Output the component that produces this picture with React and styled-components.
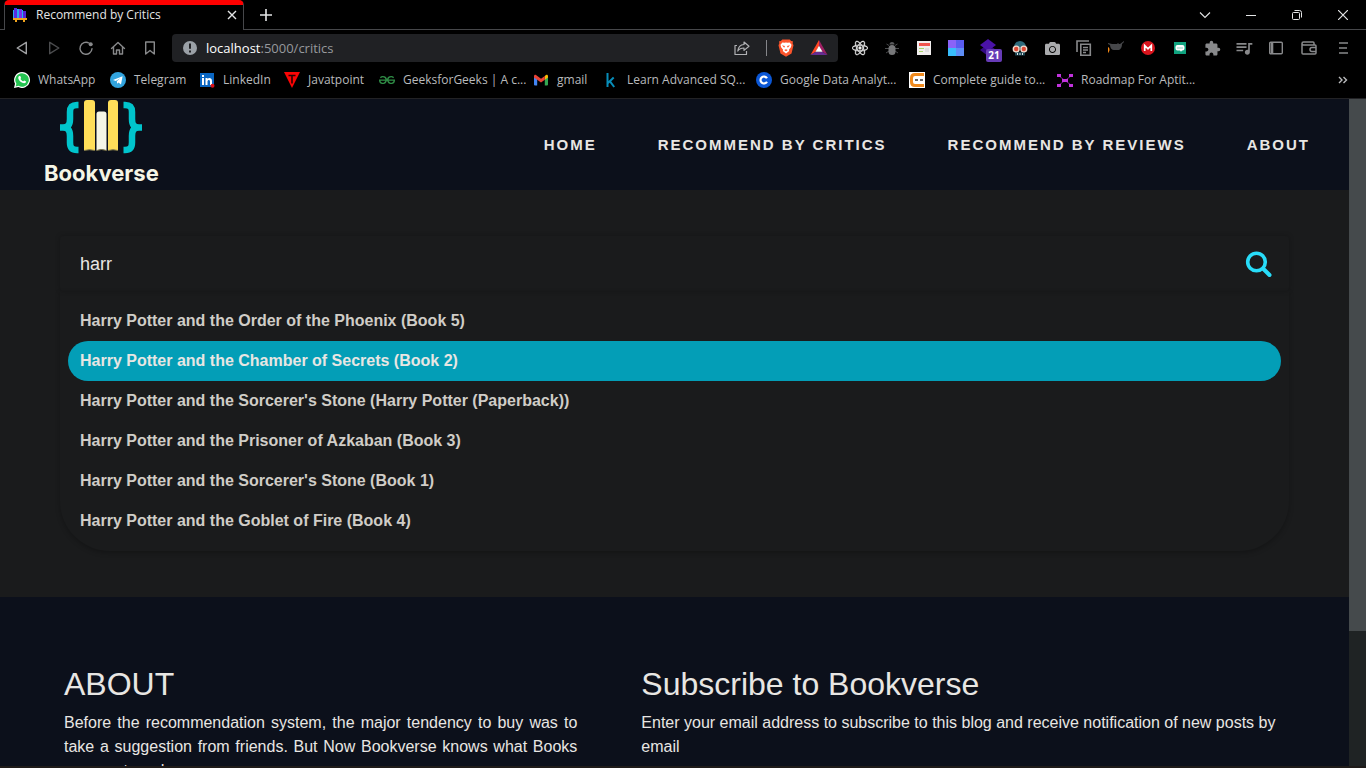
import React from "react";
import styled, { createGlobalStyle } from "styled-components";
import { FaReact, FaCamera } from "react-icons/fa";
import { SiGeeksforgeeks } from "react-icons/si";
import { MdQueueMusic, MdExtension } from "react-icons/md";

const GlobalStyle = createGlobalStyle`
  * { box-sizing: border-box; }
  body { margin: 0; background: #000; }
  button { border: 0; padding: 0; background: none; color: inherit; font: inherit; }
  a { color: inherit; text-decoration: none; }
  svg { display: block; flex: none; }
`;

const Window = styled.div`
  height: 100vh;
  display: flex;
  flex-direction: column;
  overflow: hidden;
  background: #000;
  border-bottom: 2px solid #1f1b19;
  font-family: "Liberation Sans", Arial, sans-serif;
`;

/* ---------- Browser frame ---------- */

const TabStrip = styled.div`
  flex: none;
  height: 30px;
  display: flex;
  font-family: "Open Sans", "Segoe UI", sans-serif;
`;
const StripLine = styled.div`
  width: ${(p) => p.$width || "auto"};
  flex: ${(p) => (p.$width ? "none" : 1)};
  display: flex;
  justify-content: space-between;
  border-bottom: 1px solid #46474a;
`;
const Tab = styled.div`
  width: 240px;
  height: 30px;
  padding: 0 5px 5px 7px;
  display: flex;
  align-items: center;
  gap: 8px;
  border: 1px solid #46474a;
  border-top: 5px solid #fe0000;
  border-bottom: 0;
  border-radius: 5px 5px 0 0;
  color: #e4e5e6;
`;
const TabTitle = styled.span`
  flex: 1;
  font-size: 12px;
  line-height: 20px;
  white-space: nowrap;
`;
const TabButton = styled.button`
  width: ${(p) => p.$width}px;
  height: ${(p) => p.$height}px;
  display: flex;
  align-items: center;
  justify-content: center;
  color: #e4e5e6;
`;
const WindowControls = styled.div`
  display: flex;
`;

const Toolbar = styled.div`
  flex: none;
  height: 36px;
  padding: 0 6px;
  display: flex;
  align-items: center;
  color: #88898b;
`;
const ToolGroup = styled.div`
  display: flex;
  margin-left: ${(p) => p.$indent || 0}px;
`;
const ToolButton = styled.button`
  position: relative;
  width: ${(p) => (p.$wide ? 34 : 32)}px;
  height: 28px;
  display: flex;
  align-items: center;
  justify-content: center;
  color: ${(p) => p.$color || "#88898b"};
`;
const Count = styled.span`
  position: absolute;
  right: 2px;
  bottom: 0;
  width: 16px;
  height: 13px;
  border-radius: 2px;
  background: #673bb7;
  color: #fff;
  font: bold 10px/13px "Open Sans", sans-serif;
`;
const AddressBar = styled.div`
  flex: 1;
  height: 28px;
  margin-left: 6px;
  padding: 0 2px 0 10px;
  display: flex;
  align-items: center;
  border-radius: 4px;
  background: #202124;
`;
const Address = styled.div`
  flex: 1;
  margin-left: 8px;
  font: 13px/20px "Open Sans", "Segoe UI", sans-serif;
  color: #97999d;
  b { font-weight: 400; color: #fff; }
`;
const AddressDivider = styled.span`
  width: 1px;
  height: 16px;
  margin: 0 3px 0 8px;
  background: #85868a;
`;

const Bookmarks = styled.nav`
  flex: none;
  height: 33px;
  padding: 2px 18px 6px 14px;
  display: flex;
  align-items: center;
  border-bottom: 1px solid #222225;
  color: #b9babc;
  font: 12px/20px "Open Sans", "Segoe UI", sans-serif;
`;
const Bookmark = styled.a`
  flex: none;
  width: ${(p) => p.$width}px;
  display: flex;
  align-items: center;
  gap: 8px;
  white-space: nowrap;
`;
const MoreBookmarks = styled.button`
  margin-left: auto;
`;

/* ---------- Site ---------- */

const Viewport = styled.div`
  flex: 1;
  min-height: 0;
  display: flex;
`;
const Page = styled.div`
  flex: 1;
  overflow: hidden;
  background: #1a1b1c;
  color: #e8e6e3;
`;
const ScrollTrack = styled.div`
  flex: none;
  width: 17px;
  background: #1f2324;
`;
const ScrollThumb = styled.div`
  height: 79.8%;
  background: #454a4c;
`;

const SiteHeader = styled.header`
  height: 91px;
  padding: 0 39px 0 44px;
  display: flex;
  align-items: center;
  justify-content: space-between;
  background: #0c101b;
`;
const Brand = styled.a`
  align-self: flex-start;
  display: flex;
  flex-direction: column;
  align-items: center;
  font: bold 22px/26px Inter, "Liberation Sans", sans-serif;
  color: #f5f5e6;
  svg { margin-bottom: 4px; }
`;
const SiteNav = styled.nav`
  display: flex;
  gap: 61px;
  font-size: 15px;
  font-weight: bold;
  line-height: 24px;
  letter-spacing: 2px;
`;

const Main = styled.main`
  padding: 46px 60px;
`;
const SearchBox = styled.form`
  height: 55px;
  padding: 0 15px 0 20px;
  display: flex;
  align-items: center;
  border-radius: 4px;
  box-shadow: 0 0 5px rgba(0, 0, 0, 0.25);
`;
const SearchInput = styled.input`
  flex: 1;
  min-width: 0;
  padding: 0;
  border: 0;
  outline: 0;
  background: none;
  color: #e8e6e3;
  font: 18px/24px "Liberation Sans", Arial, sans-serif;
`;
const Suggestions = styled.ul`
  margin: 0;
  padding: 10px 8px;
  list-style: none;
  border-radius: 0 0 50px 50px;
  box-shadow: 0 2px 5px rgba(0, 0, 0, 0.25);
`;
const Suggestion = styled.li`
  padding: 0 12px;
  border-radius: 20px;
  background: ${(p) => (p.$active ? "#039eb7" : "transparent")};
  color: ${(p) => (p.$active ? "#e8e6e3" : "#d0cdc7")};
  font-size: 16px;
  font-weight: bold;
  line-height: 39px;
  height: 40px;
`;

const SiteFooter = styled.footer`
  padding: 68px 66px 68px 64px;
  display: grid;
  grid-template-columns: 4fr 5fr;
  gap: 64px;
  background: #0c101b;
`;
const FooterTitle = styled.h2`
  margin: 0 0 7px;
  font-size: 32px;
  font-weight: 400;
  line-height: 39px;
`;
const FooterText = styled.p`
  margin: 0;
  font-size: 16px;
  line-height: 24px;
  text-align: ${(p) => (p.$justify ? "justify" : "left")};
`;

/* ---------- Drawings ---------- */

const Draw = ({ s = 16, box = 16, children, ...rest }) => (
  <svg width={s} height={s} viewBox={`0 0 ${box} ${box}`} fill="none" stroke="currentColor" strokeWidth="1.4" aria-hidden="true" {...rest}>
    {children}
  </svg>
);

const Shelf = () => (
  <Draw stroke="none">
    <path fill="#5b2be0" d="M2 1h3v10H2z" />
    <path fill="#2aa8f2" d="M5 2h2v9H5zM1 3h1v8H1z" />
    <path fill="#7b2ff0" d="M7 2h3v9H7z" />
    <path fill="#22b4f0" d="M10 3h1v8h-1z" />
    <path fill="#5224d8" d="M11 4h3v7h-3z" />
    <path fill="#f0a31c" d="M1 11h14v2h-2v2h-2v-2H5v2H3v-2H1z" />
  </Draw>
);
const Back = () => <Draw><path d="M12.3 2.3v11.4L3.2 8z" strokeLinejoin="round" /></Draw>;
const Forward = () => <Draw><path d="M3.7 2.3v11.4L12.8 8z" strokeLinejoin="round" /></Draw>;
const Reload = () => (
  <Draw>
    <path d="M10.9 3A6 6 0 1 0 14 8.8" strokeLinecap="round" />
    <circle cx="12.7" cy="4.2" r="2" fill="currentColor" stroke="none" />
  </Draw>
);
const Home = () => <Draw><path d="m1.5 8.4 6.5-6 6.5 6M3.5 7v7h3v-4h3v4h3V7" strokeLinejoin="round" strokeLinecap="round" /></Draw>;
const Ribbon = () => <Draw><path d="M3.7 2h8.6v12L8 10.5 3.7 14z" strokeLinejoin="round" /></Draw>;
const Info = () => (
  <Draw stroke="none">
    <circle cx="8" cy="8" r="7" fill="#9aa0a6" />
    <path fill="#202124" d="M7 3.6h2v5.2H7zM7 10.4h2v2H7z" />
  </Draw>
);
const Share = () => (
  <Draw strokeWidth="1.2" color="#b0b1b4">
    <path d="M3 5.500H1v9h11.500V11M10 2l5 4.200-5 4.200V8c-3 0-4.800.9-6.200 3C4.200 7.200 6.300 4.800 10 4.500z" strokeLinejoin="round" />
  </Draw>
);
const Lion = () => (
  <Draw s={18} box={18} stroke="none">
    <path fill="#fb542b" d="m5.300.5-1.400 1.600-1.800.2.200 2.200-.8 1.700 2 8.200L9 17.700l5.500-3.300 2-8.200-.8-1.700.2-2.200-1.800-.2L12.700.5z" />
    <path fill="#fff" d="m5.400 3.400 2 .4 1.600-.4 1.600.4 2-.4 1.900 2.400-.6 2.400-2 2.500.3 1.400L9 14.600l-3.200-2.500.3-1.400-2-2.500-.6-2.400z" />
    <path fill="#fb542b" d="m5 6.200 3 .8-.8 1.800zM13 6.200l-3 .8.800 1.800zM7.200 11 9 10.200l1.800.8L9 12.200z" />
  </Draw>
);
const Bat = () => (
  <Draw s={18} box={18} stroke="none">
    <path fill="#ff4724" d="M9 1 .5 16 5.800 12.700 9 7z" />
    <path fill="#9e1f63" d="m9 1 8.500 15-5.300-3.300L9 7z" />
    <path fill="#662d91" d="M.5 16h17l-5.300-3.300H5.800z" />
    <path fill="#fff" d="m9 6.800 3.500 6h-7z" />
  </Draw>
);
const Beetle = () => (
  <Draw strokeWidth="1">
    <path stroke="#4a4b4d" d="M5 5.500 2.500 4M5 8.500H1M5 11l-3 2M11 5.500 13.500 4M11 8.500h4M11 11l3 2" />
    <path fill="#58595b" stroke="none" d="M5.500 4.500a2.500 2.500 0 0 1 5 0z" />
    <rect x="4.500" y="5" width="7" height="10" rx="3.500" fill="#77787a" stroke="none" />
  </Draw>
);
const Note = () => (
  <Draw stroke="none">
    <path fill="#f1eeee" d="M1 1h14v14H1z" />
    <path fill="#f0554f" d="M3 3h11v3H3z" />
    <path fill="#a8d36a" d="M3 8h5v1H3zM3 11h4v1H3z" />
    <path fill="#dedede" d="M9 8h4v4H9z" />
  </Draw>
);
const Mosaic = () => (
  <Draw stroke="none">
    <path fill="#8a63f8" d="M0 0h8v8H0z" />
    <path fill="#5a5cf0" d="M8 0h8v8H8z" />
    <path fill="#38bdfb" d="M0 8h8v8H0z" />
    <path fill="#5e8df6" d="M8 8h8v8H8z" />
  </Draw>
);
const Layers = () => (
  <Draw s={18} box={18} stroke="none">
    <path fill="#330a84" d="m9 5 8 6-8 6-8-6z" />
    <path fill="#4a12a8" d="m9 0 8 6-8 6-8-6z" />
  </Draw>
);
const Goggles = () => (
  <Draw stroke="none">
    <path fill="#2d6b7c" d="M2 7a6 6 0 0 1 12 0v1H2z" />
    <path fill="#1a4654" d="M3 12h10v3.500H3z" />
    <path fill="#ddd" d="M5 13h1v2H5zM7.500 13h1v2h-1zM10 13h1v2h-1z" />
    <circle cx="4.200" cy="9" r="3.600" fill="#f0d9cc" />
    <circle cx="11.800" cy="9" r="3.600" fill="#f0d9cc" />
    <circle cx="4.200" cy="9" r="2.200" fill="#dd4a35" />
    <circle cx="11.800" cy="9" r="2.200" fill="#dd4a35" />
  </Draw>
);
const Pages = () => (
  <Draw strokeWidth="1.600">
    <path d="M1 12V1h12" />
    <path d="M4.800 4.300h9.500v10.900H4.800zM7 7.500h5M7 10h5M7 12.500h3" />
  </Draw>
);
const Teapot = () => (
  <Draw stroke="none">
    <path fill="#46474a" d="M4 4h5l1-1 1 1h1l4-3v1l-2 2c0 4-2 6-4 6H6C4 10 2 8 2 5L0 4V3l4 1z" />
    <path fill="#f78a16" d="M0 7c2 1 2 4 0 6z" />
  </Draw>
);
const Mega = () => (
  <Draw stroke="none">
    <circle cx="8" cy="8" r="7" fill="#d9141d" />
    <path d="M4.700 11V5.500L8 8.800l3.300-3.300V11" stroke="#fff" strokeWidth="1.700" />
  </Draw>
);
const ChatBubble = () => (
  <Draw stroke="none">
    <path fill="#10a37f" d="M2 2h12v12H2z" />
    <path fill="#fff" d="M5.500 5h5a2 2 0 0 1 2 2v1.500a2 2 0 0 1-2 2H10L9 11.800 8 10.500H5.500a2 2 0 0 1-2-2V7a2 2 0 0 1 2-2z" />
    <path d="M5.500 8h5" stroke="#10a37f" strokeWidth="1" strokeDasharray="1 1" />
  </Draw>
);
const Sidebar = () => <Draw><rect x="1.700" y="2.200" width="12.600" height="11.600" rx="1" /><path d="M4 3v10" strokeWidth="2.600" /></Draw>;
const Wallet = () => <Draw strokeWidth="1.500"><path d="M13 4.500V3a1 1 0 0 0-1-1H2.500a1.500 1.500 0 0 0 0 3H14a1 1 0 0 1 1 1v7a1 1 0 0 1-1 1H2a1 1 0 0 1-1-1V3.500M15 7.500h-4a2 2 0 0 0 0 4h4" /></Draw>;
const Menu = () => <Draw><path d="M4 3h9M4 8h8M4 13h9" strokeWidth="1.600" /></Draw>;

const WhatsAppLogo = () => (
  <Draw stroke="none">
    <path fill="#fff" d="M8 0a8 8 0 1 1-3.700 15.100L0 16l1-4.200A8 8 0 0 1 8 0z" />
    <path fill="#25c351" d="M8 1.200a6.800 6.800 0 1 1-3.500 12.600l-2.900.7.800-2.800A6.800 6.800 0 0 1 8 1.200z" />
    <path fill="#fff" d="M5.200 4.100c.5-.4 1-.2 1.200.2l.6 1.400c.1.400-.5.900-.5 1.200.5 1 1.500 1.900 2.600 2.300.4 0 .8-.9 1.100-.8l1.600.8c.4.300.1 1.200-.3 1.600-.7.600-1.700.7-3.200 0C6.400 9.900 5.300 8.700 4.500 7c-.5-1.100-.1-2.300.7-2.900z" />
  </Draw>
);
const TelegramLogo = () => (
  <Draw stroke="none">
    <circle cx="8" cy="8" r="8" fill="#32a4de" />
    <path fill="#fff" d="m3 7.900 9.600-3.700-1.600 8.200-2.500-1.900-1.300 1.300-.4-2.500 3.800-3.400-4.800 3z" />
  </Draw>
);
const LinkedInLogo = () => (
  <Draw stroke="none">
    <path fill="#0a66c2" d="M1 1h14v14H1z" />
    <path fill="#fff" d="M3 6h2v7H3zM3 3h2v2H3zM6.500 6h2v1c1-1.500 4.500-1.500 4.500 2v4h-2V9.500c0-2.300-2.500-2-2.500 0V13h-2z" />
    <circle cx="13.500" cy="13.800" r="2" fill="#d8121a" />
  </Draw>
);
const JavatpointLogo = () => (
  <Draw stroke="none">
    <path fill="#fb0505" d="M0 0h16L8 16z" />
    <path d="M4.500 3.500h7M8 3.500v8" stroke="#2a0000" strokeWidth="1.600" />
  </Draw>
);
const GmailLogo = () => (
  <Draw stroke="none">
    <path fill="#4285f4" d="M1 4.500 4.200 7v6.500H2a1 1 0 0 1-1-1z" />
    <path fill="#34a853" d="M15 4.500 11.800 7v6.500H14a1 1 0 0 0 1-1z" />
    <path fill="#fbbc04" d="M11.800 4 13 3c1-.6 2 0 2 1.200v1.300l-3.200 2.300z" />
    <path fill="#ea4335" d="M1 5.500V4.200C1 3 2 2.400 3 3l5 3.800L11.800 4v3.800L8 10.600 4.200 7.800z" />
  </Draw>
);
const KaggleLogo = () => <Draw><path d="M4.500 1v14M10.700 5.500 5 11M7 9.300l4.200 5.700" stroke="#078db9" strokeWidth="2" /></Draw>;
const CourseraLogo = () => (
  <Draw>
    <circle cx="8" cy="8" r="8" fill="#0b57d6" stroke="none" />
    <path d="M11 6.200a3.500 3.500 0 1 0 0 3.600" stroke="#fff" strokeWidth="2.200" />
  </Draw>
);
const GuideLogo = () => (
  <Draw>
    <path fill="#fff" stroke="none" d="M0 0h16v16H0z" />
    <path d="M15 2.500H6C3.500 2.500 2.500 4 2.500 6v4c0 2 1 3.500 3.500 3.500h9" stroke="#f08a1d" strokeWidth="3" />
    <path d="M6 8h3M11 8h3" stroke="#333" strokeWidth="1.500" />
  </Draw>
);
const RoadmapLogo = () => (
  <Draw stroke="none">
    <path d="m2 4 12 9M14 4 2 13" stroke="#7d1f92" strokeWidth="1" />
    <path fill="#c233dd" d="M0 2h4v3H0zM12 2h4v3h-4zM0 12h4v3H0zM12 12h4v3h-4zM5 7h6v3H5z" />
  </Draw>
);

const BookverseMark = () => (
  <svg width="82" height="57" viewBox="0 0 82 57" aria-hidden="true">
    <g fill="none" stroke="#00c4cc" strokeWidth="6.500">
      <path d="M18.500 6H17c-5 0-7 2-7 7v7c0 5-1.500 8.500-7 8.500H0h3c5.500 0 7 3.500 7 8.500v6.500c0 5 2 7.500 7 7.500h1.500" />
      <path d="M63.500 6H65c5 0 7 2 7 7v7c0 5 1.500 8.500 7 8.500h3-3c-5.500 0-7 3.500-7 8.500v6.500c0 5-2 7.500-7 7.500h-1.500" />
    </g>
    <path fill="#ffde59" d="M24 4q0-3 3-3h5q3 0 3 3v47.500q-5.500-1.500-11 0zM48 4q0-3 3-3h4q3 0 3 3v47.500q-5-1.500-10 0z" />
    <path fill="#f5f5e6" d="M36.500 15q0-2.500 2.500-2.500h5q2.500 0 2.500 2.500v36.500q-5-2-10 0z" />
    <path fill="none" stroke="#7a7346" d="M24 51.500q5.500-1.500 11 0M48 51.500q5-1.500 10 0M36.500 51.500q5-2 10 0" />
  </svg>
);
const Magnifier = () => (
  <svg width="30" height="30" viewBox="0 0 30 30" fill="none" stroke="#28dcf8" strokeLinecap="round" aria-hidden="true">
    <circle cx="12.500" cy="13" r="8.800" strokeWidth="3.600" />
    <path d="m19.500 20 6 6" strokeWidth="4" />
  </svg>
);

/* ---------- Data ---------- */

const navTools = [
  ["Back", <Back />, "#a2a3a5"],
  ["Forward", <Forward />, "#4b4c4e"],
  ["Reload", <Reload />],
  ["Home", <Home />],
  ["Bookmark this page", <Ribbon />],
];
const extensions = [
  ["React tools", <FaReact size={16} stroke="#f0f0f0" strokeWidth={14} />, "#f0f0f0"],
  ["Bug reporter", <Beetle />],
  ["Notes", <Note />],
  ["Mosaic", <Mosaic />],
  ["Layers", <><Layers /><Count>21</Count></>],
  ["Goggles", <Goggles />],
  ["Screenshot", <FaCamera size={15} />, "#aaabad"],
  ["Copy pages", <Pages />],
  ["Teapot", <Teapot />],
  ["Mega", <Mega />],
  ["Chat", <ChatBubble />],
  ["Extensions", <MdExtension size={17} />],
  ["Playlist", <MdQueueMusic size={20} />],
  ["Sidebar", <Sidebar />],
];
const bookmarks = [
  ["WhatsApp", <WhatsAppLogo />, 96],
  ["Telegram", <TelegramLogo />, 89],
  ["LinkedIn", <LinkedInLogo />, 85],
  ["Javatpoint", <JavatpointLogo />, 95],
  ["GeeksforGeeks | A c...", <SiGeeksforgeeks size={16} color="#2f8d46" />, 154],
  ["gmail", <GmailLogo />, 70],
  ["Learn Advanced SQ...", <KaggleLogo />, 153],
  ["Google Data Analyt...", <CourseraLogo />, 153],
  ["Complete guide to...", <GuideLogo />, 148],
  ["Roadmap For Aptit...", <RoadmapLogo />, 150],
];
const books = [
  "Harry Potter and the Order of the Phoenix (Book 5)",
  "Harry Potter and the Chamber of Secrets (Book 2)",
  "Harry Potter and the Sorcerer's Stone (Harry Potter (Paperback))",
  "Harry Potter and the Prisoner of Azkaban (Book 3)",
  "Harry Potter and the Sorcerer's Stone (Book 1)",
  "Harry Potter and the Goblet of Fire (Book 4)",
];
const links = ["HOME", "RECOMMEND BY CRITICS", "RECOMMEND BY REVIEWS", "ABOUT"];

export default function App() {
  return (
    <Window>
      <GlobalStyle />
      <TabStrip>
        <StripLine $width="4px" />
        <Tab>
          <Shelf />
          <TabTitle>Recommend by Critics</TabTitle>
          <TabButton $width={12} $height={20} aria-label="Close tab">
            <Draw s={10} box={10}><path d="m1 1 8 8M9 1 1 9" /></Draw>
          </TabButton>
        </Tab>
        <StripLine>
          <TabButton $width={44} $height={29} aria-label="New tab">
            <Draw s={12} box={12}><path d="M6 0v12M0 6h12" strokeWidth="1.600" /></Draw>
          </TabButton>
          <WindowControls>
            <TabButton $width={46} $height={29} aria-label="Search tabs"><Draw s={12} box={12} strokeWidth="1.100"><path d="m1 3.500 5 5 5-5" /></Draw></TabButton>
            <TabButton $width={46} $height={29} aria-label="Minimize"><Draw s={10} box={10} strokeWidth="1"><path d="M0 5.500h10" /></Draw></TabButton>
            <TabButton $width={46} $height={29} aria-label="Restore"><Draw s={10} box={10} strokeWidth="1"><rect x=".5" y="2.500" width="7" height="7" rx="1" /><path d="M2.500.5h5a2 2 0 0 1 2 2v5" /></Draw></TabButton>
            <TabButton $width={46} $height={29} aria-label="Close window"><Draw s={10} box={10} strokeWidth="1.200"><path d="m0 0 10 10M10 0 0 10" /></Draw></TabButton>
          </WindowControls>
        </StripLine>
      </TabStrip>

      <Toolbar>
        <ToolGroup>
          {navTools.map(([label, icon, color]) => (
            <ToolButton key={label} aria-label={label} $color={color}>{icon}</ToolButton>
          ))}
        </ToolGroup>
        <AddressBar>
          <Info />
          <Address><b>localhost</b>:5000/critics</Address>
          <ToolButton aria-label="Share"><Share /></ToolButton>
          <AddressDivider />
          <ToolButton aria-label="Shields"><Lion /></ToolButton>
          <ToolButton $wide aria-label="Rewards"><Bat /></ToolButton>
        </AddressBar>
        <ToolGroup $indent={6}>
          {extensions.map(([label, icon, color]) => (
            <ToolButton key={label} aria-label={label} $color={color}>{icon}</ToolButton>
          ))}
          <ToolButton $wide aria-label="Wallet"><Wallet /></ToolButton>
          <ToolButton $wide aria-label="Menu"><Menu /></ToolButton>
        </ToolGroup>
      </Toolbar>

      <Bookmarks aria-label="Bookmarks">
        {bookmarks.map(([label, icon, width]) => (
          <Bookmark key={label} href="#" $width={width}>{icon}{label}</Bookmark>
        ))}
        <MoreBookmarks aria-label="More bookmarks">
          <Draw s={10} box={10}><path d="m1 2 3 3-3 3M5.500 2l3 3-3 3" /></Draw>
        </MoreBookmarks>
      </Bookmarks>

      <Viewport>
        <Page>
          <SiteHeader>
            <Brand href="#"><BookverseMark />Bookverse</Brand>
            <SiteNav>
              {links.map((l) => <a key={l} href="#">{l}</a>)}
            </SiteNav>
          </SiteHeader>
          <Main>
            <SearchBox role="search">
              <SearchInput aria-label="Search books" defaultValue="harr" />
              <button type="button" aria-label="Search"><Magnifier /></button>
            </SearchBox>
            <Suggestions>
              {books.map((b, i) => <Suggestion key={b} $active={i === 1}>{b}</Suggestion>)}
            </Suggestions>
          </Main>
          <SiteFooter>
            <section>
              <FooterTitle>ABOUT</FooterTitle>
              <FooterText $justify>
                Before the recommendation system, the major tendency to buy was to take a suggestion
                from friends. But Now Bookverse knows what Books you want read.
              </FooterText>
            </section>
            <section>
              <FooterTitle>Subscribe to Bookverse</FooterTitle>
              <FooterText>
                Enter your email address to subscribe to this blog and receive notification of new posts by email
              </FooterText>
            </section>
          </SiteFooter>
        </Page>
        <ScrollTrack><ScrollThumb /></ScrollTrack>
      </Viewport>
    </Window>
  );
}
